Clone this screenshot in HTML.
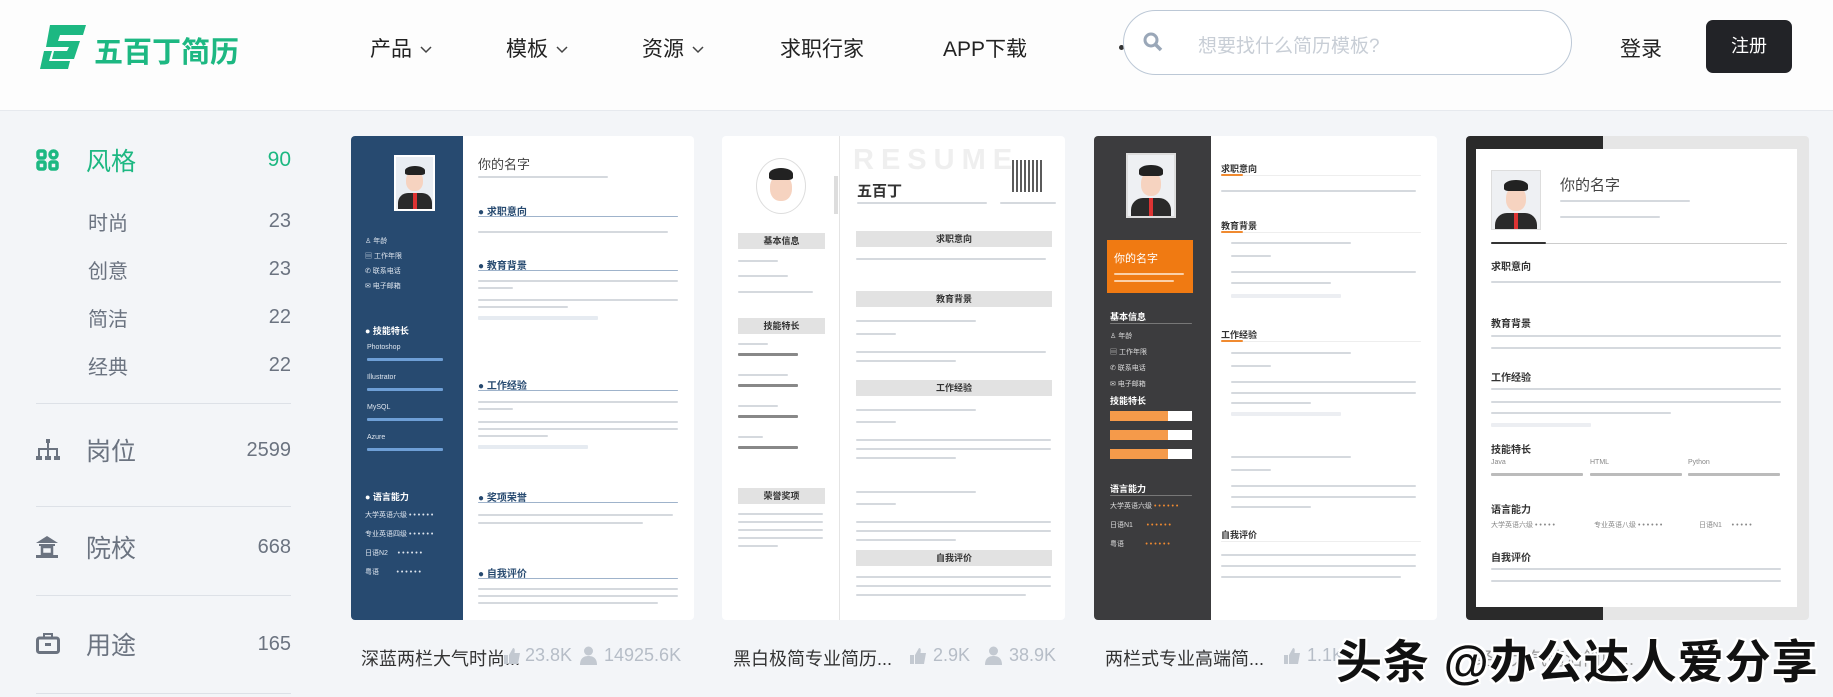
<!DOCTYPE html>
<html><head><meta charset="utf-8">
<style>
*{margin:0;padding:0;box-sizing:border-box}
body{width:1833px;height:697px;overflow:hidden;background:#f3f5f8;font-family:"Liberation Sans","Noto Sans CJK SC",sans-serif;position:relative}
.a{position:absolute}
header{position:absolute;left:0;top:0;width:1833px;height:111px;background:#fdfdfd;border-bottom:1px solid #e6e9ee}
.nav{position:absolute;top:33px;font-size:21px;color:#222}
.nav svg{margin-left:8px;vertical-align:middle}
.side{position:absolute;left:36px;width:255px;color:#6b7380;display:flex;justify-content:space-between;align-items:center;height:30px}
.side .n{font-size:20px}
.div{position:absolute;left:36px;width:255px;height:1px;background:#dde1e7}
.card{position:absolute;top:136px;width:343px;height:484px;background:#fff;border-radius:4px;overflow:hidden}
.b{position:absolute;height:3px;background:#d5d9de;border-radius:1px}
.t{position:absolute;font-size:7px;color:#888;white-space:nowrap}
.h{position:absolute;font-size:10px;font-weight:bold;color:#333;white-space:nowrap}
.cap{position:absolute;top:645px;font-size:18px;color:#333;white-space:nowrap}
.st{position:absolute;top:645px;font-size:18px;color:#b6bdc7;white-space:nowrap}
</style></head><body>
<header>
 <svg class="a" style="left:40px;top:25px" width="46" height="44" viewBox="0 0 46 44"><path d="M10 0H46L43 10H20L18 16H40L34 34H12L14 26H27L29 22H6Z" fill="#1db882"/><path d="M4 26H12L9 36H30L28 44H0Z" fill="#1db882"/></svg>
 <div class="a" style="left:94px;top:29px;font-size:29px;font-weight:bold;color:#1db882">五百丁简历</div>
 <div class="nav" style="left:370px">产品<svg width="12" height="8"><path d="M1 1L6 6L11 1" stroke="#444" fill="none" stroke-width="1.5"/></svg></div>
 <div class="nav" style="left:506px">模板<svg width="12" height="8"><path d="M1 1L6 6L11 1" stroke="#444" fill="none" stroke-width="1.5"/></svg></div>
 <div class="nav" style="left:642px">资源<svg width="12" height="8"><path d="M1 1L6 6L11 1" stroke="#444" fill="none" stroke-width="1.5"/></svg></div>
 <div class="nav" style="left:780px">求职行家</div>
 <div class="nav" style="left:943px">APP下载</div>
 <div class="a" style="left:1119px;top:45px;width:5px;height:5px;border-radius:50%;background:#333"></div>
 <div class="a" style="left:1123px;top:10px;width:449px;height:65px;border:1px solid #bcc8d6;border-radius:33px;background:#fff"></div>
 <svg class="a" style="left:1143px;top:32px" width="20" height="20"><circle cx="8" cy="8" r="6" stroke="#9aa7b8" stroke-width="3" fill="none"/><path d="M12 12L18 18" stroke="#9aa7b8" stroke-width="3.5"/></svg>
 <div class="a" style="left:1198px;top:31px;font-size:19px;color:#c8ced6">想要找什么简历模板?</div>
 <div class="a" style="left:1620px;top:33px;font-size:21px;color:#222">登录</div>
 <div class="a" style="left:1706px;top:20px;width:86px;height:53px;border-radius:7px;background:#222327;color:#fff;font-size:18px;text-align:center;line-height:53px">注册</div>
</header>

<svg class="a" style="left:36px;top:149px" width="23" height="22"><g fill="none" stroke="#1db882" stroke-width="3.5"><rect x="2" y="2" width="7" height="7" rx="1.5"/><rect x="2" y="13" width="7" height="7" rx="1.5"/><rect x="14" y="13" width="7" height="7" rx="1.5"/><circle cx="17.5" cy="5.5" r="3.5"/></g></svg>
<div class="side" style="top:145px;color:#1db882"><span style="margin-left:50px;font-size:25px">风格</span><span class="n" style="font-size:21px">90</span></div>
<div class="side" style="top:206px;font-size:20px"><span style="margin-left:52px">时尚</span><span class="n">23</span></div>
<div class="side" style="top:254px;font-size:20px"><span style="margin-left:52px">创意</span><span class="n">23</span></div>
<div class="side" style="top:302px;font-size:20px"><span style="margin-left:52px">简洁</span><span class="n">22</span></div>
<div class="side" style="top:350px;font-size:20px"><span style="margin-left:52px">经典</span><span class="n">22</span></div>
<div class="div" style="top:403px"></div>
<svg class="a" style="left:36px;top:439px" width="24" height="22"><g fill="#6b7380"><rect x="10" y="0" width="4" height="4"/><rect x="11" y="4" width="2" height="6"/><rect x="2" y="9" width="20" height="2"/><rect x="2" y="9" width="2" height="8"/><rect x="11" y="9" width="2" height="8"/><rect x="20" y="9" width="2" height="8"/><rect x="0" y="17" width="6" height="4"/><rect x="9" y="17" width="6" height="4"/><rect x="18" y="17" width="6" height="4"/></g></svg>
<div class="side" style="top:435px;font-size:25px"><span style="margin-left:50px">岗位</span><span class="n">2599</span></div>
<div class="div" style="top:506px"></div>
<svg class="a" style="left:36px;top:536px" width="22" height="22"><g fill="#6b7380"><path d="M11 0L22 7H0Z"/><rect x="3" y="8" width="16" height="2"/><rect x="6" y="11" width="10" height="7" fill="none" stroke="#6b7380" stroke-width="2.5"/><rect x="0" y="19" width="22" height="3"/></g></svg>
<div class="side" style="top:532px;font-size:25px"><span style="margin-left:50px">院校</span><span class="n">668</span></div>
<div class="div" style="top:595px"></div>
<svg class="a" style="left:36px;top:633px" width="24" height="21"><rect x="1.5" y="5" width="21" height="14.5" rx="2" fill="none" stroke="#6b7380" stroke-width="3"/><rect x="8" y="1" width="8" height="4" fill="none" stroke="#6b7380" stroke-width="2"/><rect x="9" y="10" width="6" height="3" fill="#6b7380"/></svg>
<div class="side" style="top:629px;font-size:25px"><span style="margin-left:50px">用途</span><span class="n">165</span></div>
<div class="div" style="top:693px"></div>

<!-- Card 1 -->
<div class="card" style="left:351px">
 <div class="a" style="left:0;top:0;width:112px;height:484px;background:#274a70"></div>
 <div class="a" style="left:43px;top:19px;width:41px;height:56px;background:#e9edf2;border:2px solid #fff;overflow:hidden">
  <div class="a" style="left:10px;top:14px;width:17px;height:20px;border-radius:45%;background:#f6d3c0"></div>
  <div class="a" style="left:9px;top:9px;width:20px;height:9px;border-radius:50% 50% 20% 20%;background:#222"></div>
  <div class="a" style="left:2px;top:36px;width:34px;height:20px;border-radius:10px 10px 0 0;background:#2a2a2a"></div>
  <div class="a" style="left:17px;top:36px;width:4px;height:16px;background:#d33"></div>
 </div>
 <div class="t" style="left:14px;top:100px;color:#dfe6ef">♙ 年龄</div>
 <div class="t" style="left:14px;top:115px;color:#dfe6ef">▤ 工作年限</div>
 <div class="t" style="left:14px;top:130px;color:#dfe6ef">✆ 联系电话</div>
 <div class="t" style="left:14px;top:145px;color:#dfe6ef">✉ 电子邮箱</div>
 <div class="h" style="left:14px;top:188px;color:#fff;font-size:9px">● 技能特长</div>
 <div class="t" style="left:16px;top:208px;color:#dfe6ef">Photoshop</div><div class="b" style="left:16px;top:222px;width:76px;background:#6e9fd6"></div>
 <div class="t" style="left:16px;top:238px;color:#dfe6ef">Illustrator</div><div class="b" style="left:16px;top:252px;width:76px;background:#6e9fd6"></div>
 <div class="t" style="left:16px;top:268px;color:#dfe6ef">MySQL</div><div class="b" style="left:16px;top:282px;width:76px;background:#6e9fd6"></div>
 <div class="t" style="left:16px;top:298px;color:#dfe6ef">Azure</div><div class="b" style="left:16px;top:312px;width:76px;background:#6e9fd6"></div>
 <div class="h" style="left:14px;top:354px;color:#fff;font-size:9px">● 语言能力</div>
 <div class="t" style="left:14px;top:374px;color:#dfe6ef">大学英语六级 • • • • • •</div>
 <div class="t" style="left:14px;top:393px;color:#dfe6ef">专业英语四级 • • • • • •</div>
 <div class="t" style="left:14px;top:412px;color:#dfe6ef">日语N2 &nbsp; &nbsp; • • • • • •</div>
 <div class="t" style="left:14px;top:431px;color:#dfe6ef">粤语 &nbsp; &nbsp; &nbsp; &nbsp; • • • • • •</div>
 <div class="a" style="left:127px;top:18px;font-size:13px;color:#444">你的名字</div>
 <div class="b" style="left:127px;top:40px;width:130px;height:2px"></div>
 <div class="h" style="left:127px;top:67px;color:#274a70">● 求职意向</div><div class="b" style="left:127px;top:80px;width:200px;height:1px;background:#9fb3cb"></div>
 <div class="b" style="left:127px;top:95px;width:190px;height:2px"></div>
 <div class="h" style="left:127px;top:121px;color:#274a70">● 教育背景</div><div class="b" style="left:127px;top:134px;width:200px;height:1px;background:#9fb3cb"></div>
 <div class="b" style="left:127px;top:144px;width:200px;height:2px"></div><div class="b" style="left:127px;top:151px;width:35px;height:2px"></div>
 <div class="b" style="left:127px;top:163px;width:200px;height:2px"></div><div class="b" style="left:127px;top:170px;width:90px;height:2px"></div><div class="b" style="left:127px;top:180px;width:120px;height:4px;background:#e6ebf1"></div>
 <div class="h" style="left:127px;top:241px;color:#274a70">● 工作经验</div><div class="b" style="left:127px;top:254px;width:200px;height:1px;background:#9fb3cb"></div>
 <div class="b" style="left:127px;top:265px;width:200px;height:2px"></div><div class="b" style="left:127px;top:272px;width:35px;height:2px"></div>
 <div class="b" style="left:127px;top:285px;width:200px;height:2px"></div><div class="b" style="left:127px;top:292px;width:200px;height:2px"></div><div class="b" style="left:127px;top:299px;width:70px;height:2px"></div><div class="b" style="left:127px;top:309px;width:110px;height:4px;background:#e6ebf1"></div>
 <div class="h" style="left:127px;top:353px;color:#274a70">● 奖项荣誉</div><div class="b" style="left:127px;top:366px;width:200px;height:1px;background:#9fb3cb"></div>
 <div class="b" style="left:127px;top:378px;width:195px;height:2px"></div><div class="b" style="left:127px;top:386px;width:165px;height:2px"></div>
 <div class="h" style="left:127px;top:429px;color:#274a70">● 自我评价</div><div class="b" style="left:127px;top:442px;width:200px;height:1px;background:#9fb3cb"></div>
 <div class="b" style="left:127px;top:452px;width:200px;height:2px"></div><div class="b" style="left:127px;top:459px;width:200px;height:2px"></div><div class="b" style="left:127px;top:466px;width:180px;height:2px"></div>
</div>

<!-- Card 2 -->
<div class="card" style="left:722px">
 <div class="a" style="left:117px;top:0;width:1px;height:484px;background:#e4e4e4"></div>
 <div class="a" style="left:112px;top:40px;width:4px;height:38px;background:#ddd"></div>
 <div class="a" style="left:34px;top:22px;width:50px;height:56px;border-radius:50%;border:1px solid #ddd;overflow:hidden;background:#fff">
  <div class="a" style="left:13px;top:16px;width:22px;height:26px;border-radius:45%;background:#f6d3c0"></div>
  <div class="a" style="left:12px;top:9px;width:24px;height:12px;border-radius:50% 50% 20% 20%;background:#222"></div>
 </div>
 <div class="a" style="left:131px;top:8px;font-size:29px;font-weight:bold;color:#efefef;letter-spacing:7px">RESUME</div>
 <div class="a" style="left:290px;top:24px;width:32px;height:32px;background:repeating-linear-gradient(90deg,#333 0 2px,#fff 2px 4px),#333;opacity:.8"></div>
 <div class="a" style="left:135px;top:44px;font-size:15px;font-weight:bold;color:#333">五百丁</div>
 <div class="b" style="left:135px;top:66px;width:130px;height:2px"></div><div class="b" style="left:278px;top:66px;width:56px;height:2px"></div>
 <div class="a" style="left:16px;top:97px;width:87px;height:16px;background:#e2e2e2;font-size:9px;font-weight:bold;text-align:center;line-height:16px;color:#333">基本信息</div>
 <div class="b" style="left:16px;top:124px;width:40px;height:2px"></div><div class="b" style="left:16px;top:139px;width:50px;height:2px"></div><div class="b" style="left:16px;top:155px;width:75px;height:2px"></div>
 <div class="a" style="left:16px;top:182px;width:87px;height:16px;background:#e2e2e2;font-size:9px;font-weight:bold;text-align:center;line-height:16px;color:#333">技能特长</div>
 <div class="b" style="left:16px;top:207px;width:30px;height:2px"></div><div class="b" style="left:16px;top:217px;width:60px;background:#888"></div>
 <div class="b" style="left:16px;top:238px;width:50px;height:2px"></div><div class="b" style="left:16px;top:248px;width:60px;background:#888"></div>
 <div class="b" style="left:16px;top:269px;width:40px;height:2px"></div><div class="b" style="left:16px;top:279px;width:60px;background:#888"></div>
 <div class="b" style="left:16px;top:300px;width:25px;height:2px"></div><div class="b" style="left:16px;top:310px;width:60px;background:#888"></div>
 <div class="a" style="left:16px;top:352px;width:87px;height:16px;background:#e2e2e2;font-size:9px;font-weight:bold;text-align:center;line-height:16px;color:#333">荣誉奖项</div>
 <div class="b" style="left:16px;top:377px;width:85px;height:2px"></div><div class="b" style="left:16px;top:385px;width:85px;height:2px"></div><div class="b" style="left:16px;top:393px;width:85px;height:2px"></div><div class="b" style="left:16px;top:401px;width:85px;height:2px"></div><div class="b" style="left:16px;top:409px;width:40px;height:2px"></div>
 <div class="a" style="left:134px;top:95px;width:196px;height:16px;background:#e2e2e2;font-size:9px;font-weight:bold;text-align:center;line-height:16px;color:#333">求职意向</div>
 <div class="b" style="left:134px;top:122px;width:190px;height:2px"></div>
 <div class="a" style="left:134px;top:155px;width:196px;height:16px;background:#e2e2e2;font-size:9px;font-weight:bold;text-align:center;line-height:16px;color:#333">教育背景</div>
 <div class="b" style="left:134px;top:184px;width:120px;height:2px"></div><div class="b" style="left:134px;top:197px;width:40px;height:2px"></div><div class="b" style="left:134px;top:215px;width:190px;height:2px"></div><div class="b" style="left:134px;top:224px;width:100px;height:2px"></div>
 <div class="a" style="left:134px;top:244px;width:196px;height:16px;background:#e2e2e2;font-size:9px;font-weight:bold;text-align:center;line-height:16px;color:#333">工作经验</div>
 <div class="b" style="left:134px;top:273px;width:120px;height:2px"></div><div class="b" style="left:134px;top:285px;width:40px;height:2px"></div><div class="b" style="left:134px;top:303px;width:195px;height:2px"></div><div class="b" style="left:134px;top:312px;width:195px;height:2px"></div><div class="b" style="left:134px;top:321px;width:100px;height:2px"></div>
 <div class="b" style="left:134px;top:355px;width:120px;height:2px"></div><div class="b" style="left:134px;top:367px;width:40px;height:2px"></div><div class="b" style="left:134px;top:385px;width:195px;height:2px"></div><div class="b" style="left:134px;top:394px;width:195px;height:2px"></div><div class="b" style="left:134px;top:403px;width:100px;height:2px"></div>
 <div class="a" style="left:134px;top:414px;width:196px;height:16px;background:#e2e2e2;font-size:9px;font-weight:bold;text-align:center;line-height:16px;color:#333">自我评价</div>
 <div class="b" style="left:134px;top:440px;width:195px;height:2px"></div><div class="b" style="left:134px;top:449px;width:195px;height:2px"></div><div class="b" style="left:134px;top:458px;width:170px;height:2px"></div>
</div>

<!-- Card 3 -->
<div class="card" style="left:1094px">
 <div class="a" style="left:0;top:0;width:117px;height:484px;background:#3c3c3e"></div>
 <div class="a" style="left:32px;top:17px;width:50px;height:65px;background:#eef0f3;border:2px solid #ddd;overflow:hidden">
  <div class="a" style="left:13px;top:17px;width:20px;height:24px;border-radius:45%;background:#f6d3c0"></div>
  <div class="a" style="left:11px;top:10px;width:24px;height:11px;border-radius:50% 50% 20% 20%;background:#222"></div>
  <div class="a" style="left:3px;top:43px;width:40px;height:22px;border-radius:12px 12px 0 0;background:#2a2a2a"></div>
  <div class="a" style="left:21px;top:43px;width:4px;height:18px;background:#d33"></div>
 </div>
 <div class="a" style="left:13px;top:104px;width:86px;height:53px;background:#f07a12"></div>
 <div class="a" style="left:20px;top:114px;font-size:11px;color:#fff">你的名字</div>
 <div class="b" style="left:20px;top:137px;width:70px;height:2px;background:#fbd0a8"></div><div class="b" style="left:20px;top:144px;width:60px;height:2px;background:#fbd0a8"></div>
 <div class="h" style="left:16px;top:174px;color:#fff;font-size:9px">基本信息</div><div class="b" style="left:16px;top:187px;width:82px;height:1px;background:#777"></div>
 <div class="t" style="left:16px;top:195px;color:#ddd">♙ 年龄</div><div class="t" style="left:16px;top:211px;color:#ddd">▤ 工作年限</div><div class="t" style="left:16px;top:227px;color:#ddd">✆ 联系电话</div><div class="t" style="left:16px;top:243px;color:#ddd">✉ 电子邮箱</div>
 <div class="h" style="left:16px;top:258px;color:#fff;font-size:9px">技能特长</div>
 <div class="a" style="left:16px;top:275px;width:82px;height:10px;background:#fff"><div style="width:58px;height:10px;background:#f59a4a"></div></div>
 <div class="a" style="left:16px;top:294px;width:82px;height:10px;background:#fff"><div style="width:58px;height:10px;background:#f59a4a"></div></div>
 <div class="a" style="left:16px;top:313px;width:82px;height:10px;background:#fff"><div style="width:58px;height:10px;background:#f59a4a"></div></div>
 <div class="h" style="left:16px;top:346px;color:#fff;font-size:9px">语言能力</div><div class="b" style="left:16px;top:359px;width:82px;height:1px;background:#777"></div>
 <div class="t" style="left:16px;top:365px;color:#ddd">大学英语六级 <span style="color:#f08a30">• • • • • •</span></div>
 <div class="t" style="left:16px;top:384px;color:#ddd">日语N1 &nbsp; &nbsp; &nbsp; <span style="color:#f08a30">• • • • • •</span></div>
 <div class="t" style="left:16px;top:403px;color:#ddd">粤语 &nbsp; &nbsp; &nbsp; &nbsp; &nbsp; <span style="color:#f08a30">• • • • • •</span></div>
 <div class="h" style="left:127px;top:26px;font-size:9px">求职意向</div><div class="b" style="left:127px;top:39px;width:200px;height:1px;background:#eee"></div><div class="b" style="left:127px;top:38px;width:22px;height:2px;background:#f08a30"></div>
 <div class="b" style="left:127px;top:54px;width:195px;height:2px"></div>
 <div class="h" style="left:127px;top:83px;font-size:9px">教育背景</div><div class="b" style="left:127px;top:96px;width:200px;height:1px;background:#eee"></div><div class="b" style="left:127px;top:95px;width:22px;height:2px;background:#f08a30"></div>
 <div class="b" style="left:137px;top:106px;width:120px;height:2px"></div><div class="b" style="left:137px;top:119px;width:40px;height:2px"></div><div class="b" style="left:137px;top:135px;width:185px;height:2px"></div><div class="b" style="left:137px;top:146px;width:100px;height:2px"></div><div class="b" style="left:137px;top:158px;width:110px;height:4px;background:#eceef2"></div>
 <div class="h" style="left:127px;top:192px;font-size:9px">工作经验</div><div class="b" style="left:127px;top:205px;width:200px;height:1px;background:#eee"></div><div class="b" style="left:127px;top:204px;width:22px;height:2px;background:#f08a30"></div>
 <div class="b" style="left:137px;top:216px;width:120px;height:2px"></div><div class="b" style="left:137px;top:229px;width:40px;height:2px"></div><div class="b" style="left:137px;top:245px;width:185px;height:2px"></div><div class="b" style="left:137px;top:256px;width:185px;height:2px"></div><div class="b" style="left:137px;top:266px;width:80px;height:2px"></div><div class="b" style="left:137px;top:276px;width:110px;height:4px;background:#eceef2"></div>
 <div class="b" style="left:137px;top:320px;width:120px;height:2px"></div><div class="b" style="left:137px;top:333px;width:40px;height:2px"></div><div class="b" style="left:137px;top:349px;width:185px;height:2px"></div><div class="b" style="left:137px;top:360px;width:185px;height:2px"></div><div class="b" style="left:137px;top:370px;width:80px;height:2px"></div>
 <div class="h" style="left:127px;top:392px;font-size:9px">自我评价</div><div class="b" style="left:127px;top:405px;width:200px;height:1px;background:#eee"></div>
 <div class="b" style="left:127px;top:418px;width:195px;height:2px"></div><div class="b" style="left:127px;top:429px;width:195px;height:2px"></div><div class="b" style="left:127px;top:440px;width:180px;height:2px"></div>
</div>

<!-- Card 4 -->
<div class="card" style="left:1466px;background:linear-gradient(90deg,#2a2a2a 0 137px,#e6e6e6 137px)">
 <div class="a" style="left:10px;top:13px;width:321px;height:458px;background:#fff"></div>
 <div class="a" style="left:25px;top:34px;width:50px;height:60px;background:#eef0f3;border:1px solid #ddd;overflow:hidden">
  <div class="a" style="left:14px;top:16px;width:20px;height:24px;border-radius:45%;background:#f6d3c0"></div>
  <div class="a" style="left:12px;top:9px;width:24px;height:11px;border-radius:50% 50% 20% 20%;background:#222"></div>
  <div class="a" style="left:3px;top:42px;width:42px;height:20px;border-radius:12px 12px 0 0;background:#2a2a2a"></div>
  <div class="a" style="left:22px;top:42px;width:4px;height:16px;background:#d33"></div>
 </div>
 <div class="a" style="left:94px;top:38px;font-size:15px;color:#444">你的名字</div>
 <div class="b" style="left:94px;top:64px;width:130px;height:2px"></div><div class="b" style="left:94px;top:80px;width:100px;height:2px"></div>
 <div class="b" style="left:25px;top:107px;width:296px;height:1px;background:#ccc"></div><div class="b" style="left:25px;top:106px;width:55px;height:2px;background:#333"></div>
 <div class="h" style="left:25px;top:122px">求职意向</div><div class="b" style="left:25px;top:145px;width:290px;height:2px"></div>
 <div class="h" style="left:25px;top:179px">教育背景</div><div class="b" style="left:25px;top:199px;width:290px;height:2px"></div><div class="b" style="left:25px;top:211px;width:290px;height:2px"></div>
 <div class="h" style="left:25px;top:233px">工作经验</div><div class="b" style="left:25px;top:252px;width:290px;height:2px"></div><div class="b" style="left:25px;top:265px;width:290px;height:2px"></div><div class="b" style="left:25px;top:276px;width:180px;height:2px"></div><div class="b" style="left:25px;top:287px;width:100px;height:4px;background:#eceef2"></div>
 <div class="h" style="left:25px;top:305px">技能特长</div><div class="t" style="left:25px;top:323px">Java</div><div class="t" style="left:124px;top:323px">HTML</div><div class="t" style="left:222px;top:323px">Python</div>
 <div class="b" style="left:25px;top:337px;width:92px;background:#bbb"></div><div class="b" style="left:124px;top:337px;width:92px;background:#bbb"></div><div class="b" style="left:222px;top:337px;width:92px;background:#bbb"></div>
 <div class="h" style="left:25px;top:365px">语言能力</div><div class="t" style="left:25px;top:384px">大学英语六级 • • • • •</div><div class="t" style="left:128px;top:384px">专业英语八级 • • • • • •</div><div class="t" style="left:233px;top:384px">日语N1 &nbsp; &nbsp; • • • • •</div>
 <div class="h" style="left:25px;top:413px">自我评价</div><div class="b" style="left:25px;top:432px;width:290px;height:2px"></div><div class="b" style="left:25px;top:444px;width:290px;height:2px"></div>
</div>

<!-- captions -->
<div class="cap" style="left:361px">深蓝两栏大气时尚...</div>
<svg class="a" style="left:503px;top:647px" width="18" height="18"><path d="M1 8H5V17H1ZM6 8L10 1C12 1 12 3 11.5 6H17L15 17H6Z" fill="#c3c9d1"/></svg>
<div class="st" style="left:525px">23.8K</div>
<svg class="a" style="left:580px;top:646px" width="17" height="19"><circle cx="8.5" cy="5" r="4.5" fill="#c3c9d1"/><path d="M0 19C0 12 4 10 8.5 10S17 12 17 19Z" fill="#c3c9d1"/></svg>
<div class="st" style="left:604px">14925.6K</div>

<div class="cap" style="left:733px">黑白极简专业简历...</div>
<svg class="a" style="left:909px;top:647px" width="18" height="18"><path d="M1 8H5V17H1ZM6 8L10 1C12 1 12 3 11.5 6H17L15 17H6Z" fill="#c3c9d1"/></svg>
<div class="st" style="left:933px">2.9K</div>
<svg class="a" style="left:985px;top:646px" width="17" height="19"><circle cx="8.5" cy="5" r="4.5" fill="#c3c9d1"/><path d="M0 19C0 12 4 10 8.5 10S17 12 17 19Z" fill="#c3c9d1"/></svg>
<div class="st" style="left:1009px">38.9K</div>

<div class="cap" style="left:1105px">两栏式专业高端简...</div>
<svg class="a" style="left:1283px;top:647px" width="18" height="18"><path d="M1 8H5V17H1ZM6 8L10 1C12 1 12 3 11.5 6H17L15 17H6Z" fill="#c3c9d1"/></svg>
<div class="st" style="left:1307px">1.1K</div>
<div class="cap" style="left:1475px;color:#999">经典大气简洁简历...</div>
<div class="a" style="left:1336px;top:626px;font-size:46px;font-weight:bold;color:#111;white-space:nowrap;letter-spacing:1px;text-shadow:2px 0 #fff,-2px 0 #fff,0 2px #fff,0 -2px #fff,2px 2px #fff,-2px -2px #fff,2px -2px #fff,-2px 2px #fff">头条 @办公达人爱分享</div>
</body></html>
